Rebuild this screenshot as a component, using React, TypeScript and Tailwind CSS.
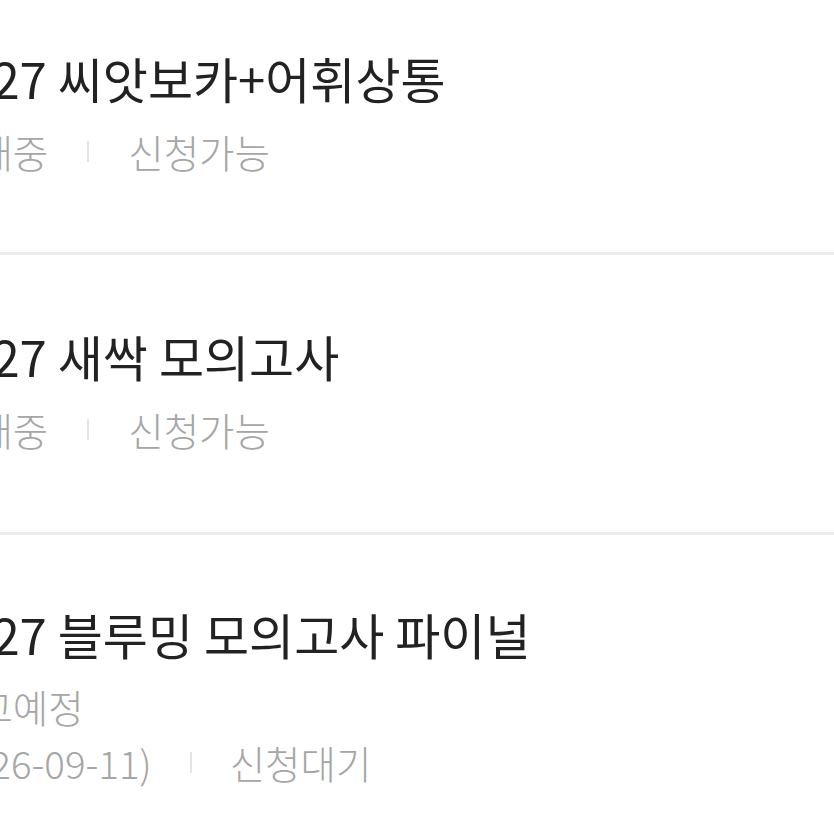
import React from "react";

const font = { fontFamily: '"Noto Sans CJK KR", "Noto Sans", sans-serif' };

function Sep() {
  return <span className="inline-block w-[2px] h-[21px] bg-[#e3e3e3] mx-[39px]" />;
}

export default function App() {
  return (
    <div className="w-[834px] h-[834px] overflow-hidden bg-white" style={font}>
      <div className="ml-[-62px] w-[896px]">
        <div className="pt-[52px] pb-[81px] border-b-[3px] border-[#ebebeb]">
          <div className="text-[49px] leading-[52px] text-[#222]">2027 씨앗보카+어휘상통</div>
          <div className="mt-[27px] ml-[4px] text-[38.5px] leading-[40px] text-[#a6a6a6] font-light flex items-center">
            <span>판매중</span>
            <Sep />
            <span>신청가능</span>
          </div>
        </div>
        <div className="pt-[75px] pb-[83px] border-b-[3px] border-[#ebebeb]">
          <div className="text-[49px] leading-[52px] text-[#222]">2027 새싹 모의고사</div>
          <div className="mt-[27px] ml-[4px] text-[38.5px] leading-[40px] text-[#a6a6a6] font-light flex items-center">
            <span>판매중</span>
            <Sep />
            <span>신청가능</span>
          </div>
        </div>
        <div className="pt-[73px] pb-[82px]">
          <div className="text-[49px] leading-[52px] text-[#222]">2027 블루밍 모의고사 파이널</div>
          <div className="mt-[26px] flex flex-col gap-[16px] text-[38.5px] leading-[40px] text-[#a6a6a6] font-light">
            <div className="ml-[4px]">출고예정</div>
            <div className="flex items-center ml-[-1px]">
              <span>(2026-09-11)</span>
              <span className="inline-block w-[2px] h-[21px] bg-[#e3e3e3] mx-[38px]" />
              <span>신청대기</span>
            </div>
          </div>
        </div>
      </div>
    </div>
  );
}
